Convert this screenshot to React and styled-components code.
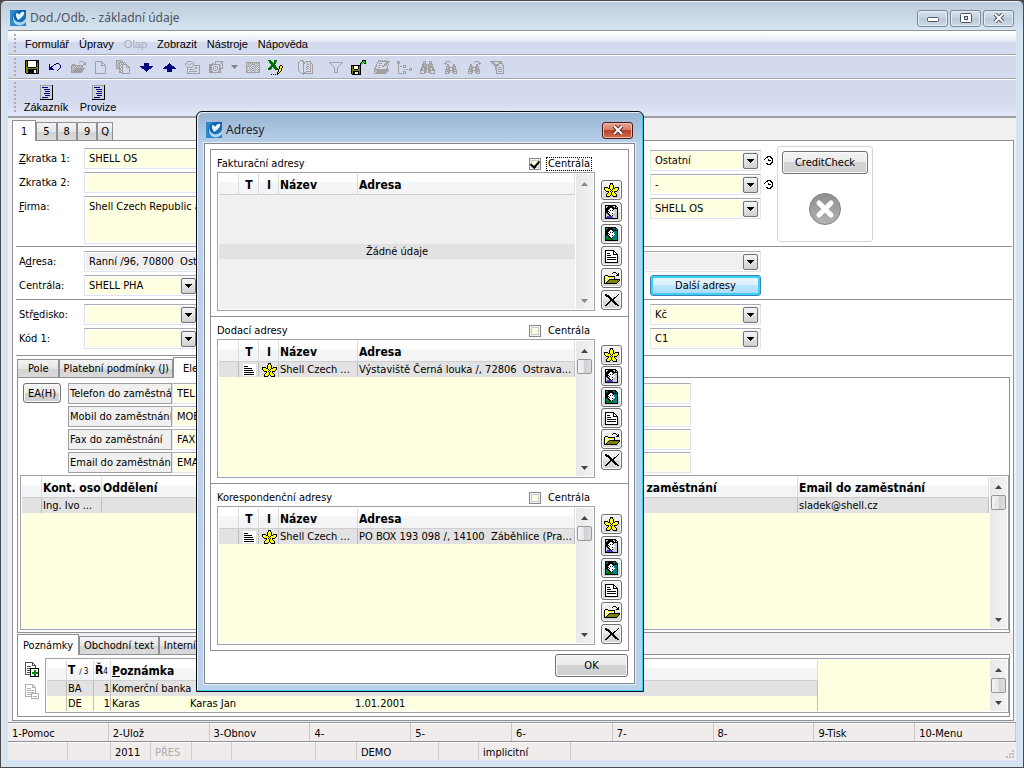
import React, { useState } from 'react';
import styled, { createGlobalStyle, css } from 'styled-components';

const ui = '"DejaVu Sans Condensed", "Noto Sans", sans-serif';
const arial = '"Liberation Sans", Arial, sans-serif';
const segoe = '"Noto Sans", "Open Sans", sans-serif';

const GlobalStyle = createGlobalStyle`
  * {
    box-sizing: border-box;
  }

  body {
    margin: 0;
    background: #4a4a4e;
    font-family: ${ui};
    font-size: 11px;
    line-height: 13px;
    color: #000;
  }

  button, input, select, textarea {
    font: inherit;
    color: inherit;
    margin: 0;
  }
`;

/* ---------- icons ---------- */

const palette = {
  k: '#000000',
  g: '#a0a0a0',
  l: '#cfd2da',
  w: '#ffffff',
  o: '#808000',
  n: '#000080',
  y: '#ffff66',
  Y: '#ffff00',
  b: '#c8c8d0',
  t: '#008080',
  d: '#007000',
  r: '#00e000',
  p: '#4040c0',
};

// Every letter in a row is one pixel, a dot is transparent
const PixelIcon = ({ rows }) => (
  <svg width={rows[0].length} height={rows.length} shapeRendering="crispEdges" aria-hidden="true">
    {rows.map((row, y) =>
      row.split('').map((c, x) =>
        palette[c] ? <rect key={`${x}-${y}`} x={x} y={y} width="1" height="1" fill={palette[c]} /> : null
      )
    )}
  </svg>
);

const icons = {
  save: [
    'kkkkkkkkkkkkkk',
    'kokwwwwwwwwkok',
    'kokwwwwwwwwkkk',
    'kokwwwwwwwwkok',
    'kokwwwwwwwwkok',
    'kokwwwwwwwwkok',
    'kokwwwwwwwwkok',
    'kookkkkkkkkook',
    'kooooooooooook',
    'kookkkkkkkkkok',
    'kookkkkkkwwkok',
    'kookkkkkkwwkok',
    'kookkkkkkwwkok',
    '.kkkkkkkkkkkkk',
  ],
  undo: [
    '.......nnn..',
    'n....nn...n.',
    'n...n......n',
    'n.nn.......n',
    'nnn........n',
    'nnnn......n.',
    'nnnnn....n..',
    '........n...',
  ],
  open: [
    '..........ggg...',
    '.........g...g.g',
    '..............gg',
    '..ggg........ggg',
    '.gggggggggggg...',
    '.glglglglglgg...',
    '.gglglglglglg...',
    '.glglgggggggggg.',
    '.gglgggggggggg..',
    '.glgggggggggg...',
    '.gggggggggggg...',
    '.ggggggggggg....',
  ],
  page: [
    'ggggggg....',
    'g.....gg...',
    'g.....g.g..',
    'g.....g..g.',
    'g.....ggggg',
    'g.........g',
    'g.........g',
    'g.........g',
    'g.........g',
    'g.........g',
    'g.........g',
    'g.........g',
    'ggggggggggg',
  ],
  pages: [
    'gggggg.........',
    'g.g.g.g........',
    'gg.gggggg......',
    'g.gg.g.g.g.....',
    'gg.g.gggggg....',
    'g.ggg.g...gg...',
    'gg.g.gg...g.g..',
    'g.gg.gg...gggg.',
    'ggggg.g......g.',
    '...gg.g......g.',
    '...g.gg......g.',
    '...gg.g......g.',
    '...gggg......g.',
    '......gggggggg.',
  ],
  down: [
    '....nnnnn....',
    '....nnnnn....',
    '....nnnnn....',
    'nnnnnnnnnnnnn',
    '.nnnnnnnnnnn.',
    '..nnnnnnnnn..',
    '....nnnnn....',
    '.....nnn.....',
    '......n......',
  ],
  up: [
    '......n......',
    '.....nnn.....',
    '....nnnnn....',
    '..nnnnnnnnn..',
    '.nnnnnnnnnnn.',
    'nnnnnnnnnnnnn',
    '....nnnnn....',
    '....nnnnn....',
    '....nnnnn....',
  ],
  mail: [
    '..ggggg.........',
    '.g.....g........',
    'g.g...g.g.......',
    'g..g.g..g.......',
    'g...g...ggggggg.',
    '.g.....g......g.',
    '..ggggg...gg..g.',
    '..g.......gg..g.',
    '..g.ggggg.....g.',
    '..g...........g.',
    '..g.gggggggg..g.',
    '..g...........g.',
    '..ggggggggggggg.',
  ],
  camera: [
    '......gggggggg',
    '......g.....gg',
    '...gg.g....g.g',
    'ggggggggggg..g',
    'gggg......gg.g',
    'ggg..ggg..g..g',
    'ggg.g...g.gg.g',
    'ggg.g.g.g.gggg',
    'ggg.g...g.gg..',
    'ggg..ggg..gg..',
    'gggg.....ggg..',
    'gggggggggggg..',
  ],
  envelope: [
    'gggggggggggggg',
    'glglglglglglgg',
    'g.g..gggg..g.g',
    'gg.gg....gg.gg',
    'g.g.g.gg.g.g.g',
    'gg.g.g..g.g.gg',
    'g...g.gg.g...g',
    'gg.g.g..g.g.gg',
    'g.g.g.gg.g.g.g',
    'gg.l.g..g.l.gg',
    'gggggggggggggg',
  ],
  excel: [
    'ddd...ddd......',
    '.ddd..ddd......',
    '.dddd.dd.......',
    '..dddddd.......',
    '...dddd........',
    '...ddddd....kk.',
    '..dddddd...kYYk',
    '.ddd.dddd..kYYk',
    'dddd..dddd.kYk.',
    'ddd....dddkYYk.',
    '..........kYYk.',
    '..........kYk..',
    '.........kYk...',
    '.........kk....',
    '...k.k.k.k.....',
  ],
  book: [
    '..ggg...........',
    '.g..gg..ggggg...',
    'g....ggg....g...',
    'g....gg..g..gg..',
    'g....g...gg.g.g.',
    'g....g..g...g.g.',
    'g....g...gg.g.g.',
    'g....g..g...g.g.',
    'g....g...gg.g.g.',
    'g....g..g...g.g.',
    'g....g......g.g.',
    '.g...g..ggggg.g.',
    '..g..ggg......g.',
    '...gggggggggggg.',
    '.....g..........',
  ],
  filter: [
    'gggggggggggggg',
    '.g..........g.',
    '..g........g..',
    '...g......g...',
    '....g....g....',
    '.....g..g.....',
    '.....g..g.....',
    '.....g..g.....',
    '.....g..g.....',
    '.....g..g.....',
    '.....gggg.....',
  ],
  saveAs: [
    '...........kkkk',
    '...........krrk',
    '..........krrrk',
    '.........krr.kk',
    '.........kr....',
    'kkkkkkkkkk.....',
    'kokwwwwkok.....',
    'kokwwwwkok.....',
    'kokwwwwkok.....',
    'kookkkkook.....',
    'kooooooook.....',
    'kokkkkkkok.....',
    'kokkwwwkok.....',
    'kokkwwwkok.....',
    '.kkkkkkkkk.....',
  ],
  stack: [
    '....g.g.g.g.g...',
    '....gggggggggggg',
    '...g........ggg.',
    '...g.ggg...ggg..',
    '..g.......ggg.g.',
    '..g.ggg..ggg.g..',
    '.gg.....gg...g..',
    '.g..gg.......g..',
    'gg..........gg..',
    'ggggggggggggggg.',
    'g.ggggggggggggg.',
    'gg.ggggggggggg..',
    'g.ggggggggggg...',
    'gggggggggggg....',
  ],
  tree: [
    'ggg............',
    'g.g............',
    'ggg............',
    '.g.............',
    '.g....ggg......',
    '.g.gg.g.g......',
    '.g....ggg......',
    '.g..........ggg',
    '.g.....g.gg.g.g',
    '.g..........ggg',
    '.g....ggg......',
    '.g....g.g......',
    '.gggg.ggg......',
  ],
  binoculars: [
    '...ggg...ggg...',
    '...g.g...g.g...',
    '...ggg...ggg...',
    '..ggggg.ggggg..',
    '..gg.ggggg.gg..',
    '..ggggg.ggggg..',
    '.gggggg.gggggg.',
    '.gg.ggggggg.gg.',
    'ggg.ggg.ggg.ggg',
    'ggggggg.ggggggg',
    'g...ggg.ggg...g',
    'g...ggg.ggg...g',
    'ggggg.....ggggg',
  ],
  findPrev: [
    '..gggg........',
    '.g....g.......',
    'ggg...........',
    '.g.gg....gg...',
    '...gg....gg...',
    '..gggg..gggg..',
    '..g.gggggg.g..',
    '..gggg..gggg..',
    '.ggggg..ggggg.',
    '.g.gggggggg.g.',
    '.ggggg..ggggg.',
    '.g..gg..gg..g.',
    '.gggg....gggg.',
  ],
  findNext: [
    '........gggg..',
    '.......g....g.',
    '...........ggg',
    '...gg....gg.g.',
    '...gg....gg...',
    '..gggg..gggg..',
    '..g.gggggg.g..',
    '..gggg..gggg..',
    '.ggggg..ggggg.',
    '.g.gggggggg.g.',
    '.ggggg..ggggg.',
    '.g..gg..gg..g.',
    '.gggg....gggg.',
  ],
  filterPage: [
    'gggggggggggg..',
    '.ggg.....ggg..',
    '..ggg...ggggg.',
    '...gggggg...g.',
    '....ggggg...gg',
    '.....gg......g',
    '.....gg.gggg.g',
    '.....gg......g',
    '.....gg.gggg.g',
    '......g......g',
    '......g.gggg.g',
    '......g......g',
    '......gggggggg',
  ],
  form: [
    'ggggggggggggk',
    'gllllllllllbk',
    'glnnnnnnlllbk',
    'gllllllllllbk',
    'glllnnnnnnlbk',
    'gllllllllllbk',
    'gllllnnnnnlbk',
    'gllllllllllbk',
    'glllnnnnnnlbk',
    'gllllllllllbk',
    'gllllnnnnnlbk',
    'gllllllllllbk',
    'glnnnnnnlllbk',
    'gbbbbbbbbbbbk',
    'kkkkkkkkkkkkk',
  ],
  contact: [
    'kkkkkkkkkkk..',
    'kbbkkkkkbbkk.',
    'kbkkkkkkkbkbk',
    'kkkkkwwkkkkkk',
    'kkkkwwwwkbbbk',
    'kkkwwkwkwbbbk',
    'kkkkwwwwwbbbk',
    'kkkwkwwwwwbbk',
    'kbkkwwwkwbbbk',
    'kbbkkwwwbbbbk',
    'kbbbkkwkbbbbk',
    'kbppppkbbbbbk',
    'kpppppppbbbbk',
    'kkkkkkkkkkkkk',
  ],
  contactAlt: [
    'kkkkkkkkkkk..',
    'kttkkkkkttkk.',
    'ktkkkkkkktktk',
    'kkkkkwwkkkkkk',
    'kkkkwwwwktttk',
    'kkkwwkwkwtttk',
    'kkkkwwwwwtttk',
    'kkkwkwwwwwttk',
    'ktkkwwwkwtttk',
    'kttkkwwwttttk',
    'ktttkkwkttttk',
    'ktddddktttttk',
    'kdddddddttttk',
    'kkkkkkkkkkkkk',
  ],
  sheet: [
    'kkkkkkkkk....',
    'kwwwwwwwkk...',
    'kwwwwwwwkwk..',
    'kwkkkwwwkwwk.',
    'kwwwwwwwkkkkk',
    'kwkkkkwwwwwwk',
    'kwwwwwwwwwwwk',
    'kwkkkkkkkkkwk',
    'kwwwwwwwwwwwk',
    'kwkkkkkkkkkwk',
    'kwwwwwwwwwwwk',
    'kwwwwwwwwwwwk',
    'kkkkkkkkkkkkk',
  ],
  folder: [
    '.........kkk....',
    '........k...k.k.',
    '.............kk.',
    '.kkk........kkk.',
    'kYwYkkkkkkk.....',
    'kwYwYwYwYwk.....',
    'kYwYwYwYwYk.....',
    'kwYwYkkkkkkkkkkk',
    'kYwYkooooooooook',
    'kwYkooooooooook.',
    'kYkooooooooook..',
    'kkkkkkkkkkkkk...',
  ],
  remove: [
    'kk...........k',
    'kkkk........k.',
    '.kkkk......k..',
    '...kkk...kk...',
    '....kkk.kk....',
    '.....kkkk.....',
    '.....kkkk.....',
    '....kk.kkk....',
    '...kk...kkk...',
    '..kk.....kkk..',
    '.kk.......kkk.',
    'kk..........kk',
  ],
  star: [
    '......kkk......',
    '......kYk......',
    '.....kYYYk.....',
    '.....kYYYk.....',
    'kkkk.kYYYk.kkkk',
    'kYYYkkYYYkkYYYk',
    'kYYYYYkYkYYYYYk',
    '.kYYYYYkYYYYYk.',
    '..kkkYkYkYkkk..',
    '....kYYkYYk....',
    '...kYYYkYYYk...',
    '..kYYYYkYYYYk..',
    '..kYYYk.kYYYk..',
    '..kkkk...kkkk..',
  ],
  text: [
    'wwwwwwwwwwwww',
    'wwwwwwwwwwwww',
    'wkkkkwwwwwwww',
    'wwwwwwwwwwwww',
    'wkkkkkkkkwwww',
    'wwwwwwwwwwwww',
    'wkkkkkkkkkwww',
    'wwwwwwwwwwwww',
    'wkkkkkkkkkkww',
    'wwwwwwwwwwwww',
    'wkkkkkkkkkkww',
    'wwwwwwwwwwwww',
  ],
  arrowDown: ['kkkkkkk', '.kkkkk.', '..kkk..', '...k...'],
  clock: [
    '...kkkk..',
    '..kk..kk.',
    '.k.....kk',
    'k...k...k',
    '....kkk.k',
    '........k',
    '.......kk',
    '..kk..kk.',
    '...kkkk..',
  ],
};

const Logo = () => (
  <svg width="16" height="16" viewBox="0 0 16 16" aria-hidden="true">
    <defs>
      <linearGradient id="logo" x1="0" y1="0" x2="1" y2="1">
        <stop offset="0" stopColor="#3d9ad6" />
        <stop offset="0.4" stopColor="#0d5aa4" />
        <stop offset="1" stopColor="#2f86c8" />
      </linearGradient>
    </defs>
    <rect width="16" height="16" fill="url(#logo)" />
    <path d="M0 0h6C3 3 2 6 2 9c1 3 3 5 5 7H0z" fill="#2b8bce" />
    <path d="M4 5c-1 5 3 8 7 7 2 0 4-2 5-4v4c-2 3-6 4-9 3-4-2-5-6-3-10z" fill="#a9d7f2" />
    <path d="M8 10C6 7 5 4 7 3c1 0 2 1 2 2 1-2 3-4 5-3 1 2-1 4-3 6z" fill="#e4f4fc" />
  </svg>
);

const NoteIcon = ({ color, minus }) => (
  <svg width="15" height="16" viewBox="0 0 15 16" shapeRendering="crispEdges" aria-hidden="true">
    <path d="M.5 .5h7l3 3v9h-10zM7.5 .5v3h3M2 4.5h4M2 6.5h7M2 8.5h7M2 10.5h4" fill="#fff" stroke={color} />
    {minus ? (
      <path d="M6.500 9.500h7v5h-7zM8 12h4" fill="#fff" stroke={color} />
    ) : (
      <>
        <rect x="5.500" y="6.500" width="8" height="8" fill="#fff" stroke="#000" />
        <path d="M10 8v6M7 11h6" stroke="#008a00" strokeWidth="2" />
      </>
    )}
  </svg>
);

/* ---------- window chrome ---------- */

const Window = styled.div`
  position: relative;
  display: flex;
  flex-direction: column;
  min-height: 100vh;
  padding: 0 7px 7px;
  border: 1px solid #4a4a4e;
  border-radius: 6px 6px 0 0;
  background: linear-gradient(#bccbdb, #d7e5f2 30px);
  box-shadow: inset 0 1px 0 #f1f5f9;
`;

const TitleBar = styled.header`
  display: flex;
  align-items: center;
  gap: 4px;
  height: ${(p) => p.$height}px;
  padding: 5px 2px 0 2px;
  font-family: ${segoe};
  color: ${(p) => p.$color};
`;

const Title = styled.h1`
  flex: 1;
  margin: 0;
  font-size: 12px;
  line-height: 16px;
  font-weight: 400;
`;

const CaptionButtons = styled.div`
  display: flex;
  gap: 2px;
`;

const CaptionButton = styled.button`
  display: flex;
  align-items: center;
  justify-content: center;
  width: 31px;
  height: 17px;
  padding: 0;
  border: 1px solid #7b8794;
  border-radius: 3px;
  background: linear-gradient(#d9e4ee, #c3d0dd 50%, #b9c8d8 50%, #cddae6);
  box-shadow: inset 0 0 0 1px #e6eef6;

  ${(p) =>
    p.$close &&
    css`
      border-color: #4b1a16;
      background: linear-gradient(#e8a598, #d57a69 48%, #b9412c 50%, #cf6f50);
      box-shadow: inset 0 0 0 1px #efb8ad;
    `}
`;

const Client = styled.div`
  display: flex;
  flex: 1;
  flex-direction: column;
  border-top: 1px solid #8f9398;
  background: #f0f0f0;
`;

const Bar = styled.div`
  display: flex;
  align-items: center;
  height: ${(p) => p.$height || 24}px;
  padding-left: 6px;
  border-top: 1px solid #fff;
  border-bottom: 1px solid #a7a9b0;
  background: #d4daee;
`;

const MenuStrip = styled(Bar).attrs({ as: 'nav' })`
  background: linear-gradient(#fff, #e4e8f4 10px, #d4daee 10px);
  font-family: ${arial};
`;

const BigBar = styled(Bar)`
  border-bottom: 2px solid #9c9ea6;
  background: linear-gradient(#d4daee 60%, #e3e7f7);
`;

const Grip = styled.span`
  align-self: stretch;
  width: 3px;
  margin: 2px 3px 2px 0;
  background: radial-gradient(circle at 1px 1px, #a9abb3 1px, transparent 1px) 0 0 / 3px 4px;
`;

const MenuLink = styled.a`
  padding: 2px 5px 0;
  color: ${(p) => (p.$disabled ? '#a9adb8' : '#000')};
  text-decoration: none;
`;

const ToolButton = styled.button`
  display: flex;
  flex: none;
  align-items: center;
  justify-content: center;
  width: ${(p) => p.$width || 23}px;
  height: 20px;
  margin-right: ${(p) => p.$after || 0}px;
  padding: 0;
  border: 0;
  background: none;
  color: #808080;
`;

const BigButton = styled.button`
  display: flex;
  flex-direction: column;
  align-items: center;
  gap: 1px;
  min-width: 52px;
  padding: 3px 3px 0;
  border: 0;
  background: none;
  font-family: ${arial};
`;

/* ---------- tabs and pages ---------- */

const TabStrip = styled.div`
  display: flex;
  align-items: flex-end;
  height: ${(p) => p.$height}px;
  margin-left: 4px;
  background: ${(p) => p.$background || 'none'};
`;

const Tab = styled.button`
  height: ${(p) => (p.$active ? 21 : 18)}px;
  padding: 0 ${(p) => p.$pad || 5}px;
  border: 1px solid #8e9097;
  border-bottom: 0;
  white-space: nowrap;
  background: linear-gradient(#f4f4f4, #e6e6e6 50%, #d2d2d2 50%, #dadada);

  ${(p) =>
    p.$active &&
    css`
      z-index: 1;
      margin-bottom: -1px;
      background: #fff;
    `}
`;

const Page = styled.main`
  display: flex;
  flex: 1;
  flex-direction: column;
  margin: 0 2px 1px 4px;
  padding-bottom: 3px;
  border: 1px solid #8e9097;
  background: #fff;
`;

const SubPage = styled.section`
  display: flex;
  flex: ${(p) => (p.$grow ? '1' : 'none')};
  flex-direction: ${(p) => (p.$row ? 'row' : 'column')};
  margin: 0 3px 0 4px;
  border: 1px solid #8e9097;
`;

/* ---------- form ---------- */

const Group = styled.div`
  display: grid;
  grid-template-columns: 65px 115px 451px 111px auto;
  grid-auto-rows: 21px;
  align-content: start;
  row-gap: 3px;
  height: ${(p) => p.$height}px;
  margin: 0 1px 0 3px;
  padding: ${(p) => p.$top || 4}px 0 0 3px;
  border-bottom: 1px solid #8e9097;
`;

const FieldLabel = styled.label`
  grid-column: 1;
  padding-top: 4px;
`;

const box = css`
  height: 21px;
  border: 1px solid #dfe3ef;
  border-top-color: #a9abb4;
  background: ${(p) => (p.$disabled ? '#f0f0f0' : '#ffffe1')};
  box-shadow: inset 0 0 0 1px #fff;
`;

const TextInput = styled.input`
  ${box}
  grid-column: ${(p) => p.$column || 'auto'};
  width: ${(p) => (p.$width ? `${p.$width}px` : '100%')};
  padding: 0 4px;
`;

const TextArea = styled.textarea`
  ${box}
  grid-column: 2 / 4;
  grid-row: 3 / 5;
  width: 400px;
  height: 48px;
  padding: 3px 4px;
  resize: none;
`;

const ComboBox = styled.div`
  ${box}
  display: flex;
  align-items: center;
  grid-column: ${(p) => p.$column};
`;

const ComboSelect = styled.select`
  flex: 1;
  min-width: 0;
  height: 19px;
  padding: 0 4px 1px;
  border: 0;
  appearance: none;
  background: none;
`;

const ComboArrow = styled.span`
  display: flex;
  align-items: center;
  justify-content: center;
  width: 17px;
  height: 17px;
  margin-right: 1px;
  background: #f0f0f0;

  &::before {
    content: '';
    position: absolute;
    width: 13px;
    height: 14px;
    border: 1px solid #70737a;
    border-radius: 2px;
    background: linear-gradient(#f6f6f6, #e2e2e2 50%, #d0d0d0);
  }

  svg {
    position: relative;
  }
`;

const Side = styled.div`
  display: flex;
  grid-column: 4 / 6;
  grid-row: 1 / 4;
  gap: 3px;
`;

const SideCombos = styled.div`
  display: flex;
  flex-direction: column;
  gap: 3px;
  width: 111px;
  padding-top: 2px;
`;

const Clocks = styled.div`
  display: flex;
  flex-direction: column;
  gap: 15px;
  width: 10px;
  padding-top: 8px;
`;

const CreditBox = styled.div`
  display: flex;
  flex-direction: column;
  align-items: center;
  gap: 19px;
  width: 96px;
  height: 96px;
  margin-top: -2px;
  padding-top: 4px;
  border: 1px solid #ccd7e2;
  border-radius: 3px;
`;

const PushButton = styled.button`
  width: ${(p) => p.$width}px;
  height: ${(p) => p.$height}px;
  padding: 0;
  border: 1px solid #707070;
  border-radius: 3px;
  background: linear-gradient(#f3f3f3, #ebebeb 50%, #d4d4d4 50%, #cfcfcf);
  box-shadow: inset 0 0 0 1px #fafafa;
  white-space: nowrap;

  ${(p) =>
    p.$focus &&
    css`
      grid-column: 4;
      border-color: #3c7fb1;
      background: linear-gradient(#eaf6fd, #d9f0fc 50%, #bee6fd 50%, #a7d9f5);
      box-shadow: inset 0 0 0 2px #3cd0f5;
    `}
`;

const PhoneArea = styled.div`
  display: grid;
  grid-template-columns: 45px 104px 519px;
  grid-auto-rows: 21px;
  row-gap: 2px;
  padding: 5px 0 2px 5px;
`;

const PhoneLabel = styled.label`
  grid-column: 2;
  padding: 3px 0 3px 1px;
  overflow: hidden;
  border: 1px solid #a0a0a4;
  background: #f0f0f0;
  white-space: nowrap;
`;

/* ---------- lists ---------- */

const ListBox = styled.div`
  display: flex;
  flex: ${(p) => (p.$height ? 'none' : '1')};
  height: ${(p) => (p.$height ? `${p.$height}px` : 'auto')};
  margin: ${(p) => p.$margin || '0'};
  padding: 1px;
  border: 1px solid #a0a2a9;
  background: #fff;
`;

const ListBody = styled.div`
  flex: 1;
  min-width: 0;
  background: ${(p) => (p.$empty ? '#f0f0f0' : '#ffffe1')};
`;

const Table = styled.table`
  width: ${(p) => (p.$width ? `${p.$width}px` : '100%')};
  table-layout: fixed;
  border-collapse: separate;
  border-spacing: 0;
`;

const Th = styled.th`
  width: ${(p) => (p.$width ? `${p.$width}px` : 'auto')};
  height: 21px;
  padding: 2px 0 0 1px;
  overflow: hidden;
  border-right: 1px solid #dcdcdc;
  border-bottom: 1px solid #cfcfcf;
  background: linear-gradient(#fff 40%, #f4f6f8 40%, #f1f3f5);
  font-size: 12px;
  text-align: ${(p) => p.$align || 'left'};
  white-space: nowrap;
`;

const Td = styled.td`
  height: 15px;
  padding: 1px 0 0 1px;
  overflow: hidden;
  border-right: 1px solid #bdbdbd;
  background: ${(p) => (p.$selected ? '#e2e2e2' : '#ffffe1')};
  line-height: 14px;
  text-align: ${(p) => p.$align || 'left'};
  text-overflow: ellipsis;
  white-space: pre;

  svg {
    display: block;
    margin: 0 auto;
  }
`;

const EmptyRow = styled.p`
  margin: 49px 0 0;
  background: #e2e2e2;
  line-height: 15px;
  text-align: center;
`;

const Track = styled.div`
  display: flex;
  flex-direction: column;
  align-items: center;
  width: 17px;
  margin-left: 1px;
  padding: 1px 1px 0 0;
  background: linear-gradient(90deg, #e8e8e8, #f2f2f2);
`;

const ScrollButton = styled.button`
  width: 15px;
  height: 17px;
  padding: 0;
  border: 0;
  background: none;
  color: ${(p) => (p.$dim ? '#888' : '#444')};
  line-height: 0;
`;

const Thumb = styled.div`
  width: 15px;
  height: 15px;
  border: 1px solid #979797;
  border-radius: 2px;
  background: linear-gradient(90deg, #f4f4f4, #e4e4e4 50%, #cfcfd4 50%, #dedee2);
`;

const Spacer = styled.div`
  flex: 1;
`;

const NoteIcons = styled.div`
  display: flex;
  flex-direction: column;
  gap: 6px;
  width: 27px;
  padding: 7px 0 0 7px;
`;

const NotePart = styled.span`
  display: inline-block;
  width: ${(p) => p.$width}px;
`;

const Small = styled.span`
  font-size: 8px;
  font-weight: 400;
`;

const Keys = styled.footer`
  display: flex;
  height: 19px;
  border-top: 1px solid #8e9097;
  background: #f0eceb;
  box-shadow: inset 0 1px 0 #fff;
`;

const Key = styled.button`
  flex: 1;
  padding: 2px 0 0 4px;
  border: 0;
  border-right: 1px solid #c9c9c9;
  background: none;
  text-align: left;
`;

const StatusCell = styled.span`
  width: ${(p) => p.$width}px;
  padding: 4px 0 0 4px;
  border-right: 1px solid #d0cdcc;
  color: ${(p) => (p.$dim ? '#b0adac' : '#000')};
`;

const SizeGrip = styled.svg`
  align-self: flex-end;
  margin: 0 2px 2px auto;
`;

/* ---------- dialog ---------- */

const Dialog = styled.div`
  position: absolute;
  top: 110px;
  left: 195px;
  z-index: 5;
  width: 448px;
  padding: 0 8px 7px 7px;
  border: 1px solid #0c0f14;
  border-radius: 6px 6px 0 0;
  background: linear-gradient(#98b4d2, #b9d1ea 32px);
  box-shadow: inset -1px -1px 0 #35d3f0, inset 1px 1px 0 #e3eef8;
`;

const DialogBody = styled.div`
  padding: 5px;
  border: 1px solid #83868c;
  outline: 1px solid #e6eef7;
  background: #fff;
`;

const Sections = styled.div`
  border: 1px solid #8e9097;
`;

const Section = styled.section`
  display: grid;
  grid-template-columns: 378px 21px;
  column-gap: 6px;
  height: 167px;
  padding-left: 6px;
  border-bottom: 1px solid #8e9097;

  &:last-child {
    height: 166px;
    border-bottom: 0;
  }
`;

const SectionHead = styled.div`
  display: flex;
  align-items: center;
  justify-content: space-between;
  height: 22px;
  padding: 5px 3px 0 0;
`;

const CheckLabel = styled.label`
  display: flex;
  align-items: center;
  gap: 5px;

  span {
    padding: 0 1px;
    border: 1px dotted ${(p) => (p.$focus ? '#000' : 'transparent')};
    line-height: 12px;
  }
`;

const CheckBox = styled.input`
  display: grid;
  place-items: center;
  width: 12px;
  height: 12px;
  border: 1px solid #85878c;
  appearance: none;
  background: #ffffe1;
  box-shadow: inset 0 0 0 1px #f4f4f4, inset 0 0 0 2px #c8cace;

  &:checked::before {
    content: '';
    width: 4px;
    height: 7px;
    border: solid #000;
    border-width: 0 2px 2px 0;
    transform: rotate(40deg);
  }
`;

const SideButtons = styled.div`
  display: flex;
  flex-direction: column;
  gap: ${(p) => (p.$compact ? 1 : 2)}px;
  padding-top: ${(p) => (p.$compact ? 28 : 30)}px;
`;

const IconButton = styled.button`
  display: flex;
  align-items: center;
  justify-content: center;
  width: 21px;
  height: 20px;
  padding: 0;
  border: 1px solid #707070;
  border-radius: 3px;
  background: linear-gradient(#f3f3f3, #ebebeb 50%, #dcdcdc 50%, #d4d4d4);
  box-shadow: inset 0 0 0 1px #fafafa;
`;

const DialogFooter = styled.div`
  display: flex;
  justify-content: flex-end;
  padding: 3px 1px 1px 0;
`;

/* ---------- composed parts ---------- */

const Combo = ({ id, value, column, disabled, label }) => (
  <ComboBox $column={column} $disabled={disabled}>
    <ComboSelect id={id} aria-label={label} defaultValue={value}>
      <option>{value}</option>
    </ComboSelect>
    <ComboArrow>
      <PixelIcon rows={icons.arrowDown} />
    </ComboArrow>
  </ComboBox>
);

const ScrollBar = ({ dim }) => (
  <Track>
    <ScrollButton $dim={dim} aria-label="Nahoru">
      <svg width="7" height="4">
        <path d="M0 4L3.500 0L7 4z" fill="currentColor" />
      </svg>
    </ScrollButton>
    {!dim && <Thumb />}
    <Spacer />
    <ScrollButton $dim={dim} aria-label="Dolů">
      <svg width="7" height="4">
        <path d="M0 0L3.500 4L7 0z" fill="currentColor" />
      </svg>
    </ScrollButton>
  </Track>
);

const AddressSection = ({ title, central, focus, compact, row }) => {
  const [checked, setChecked] = useState(central);

  return (
    <Section>
      <div>
        <SectionHead>
          <span>{title}</span>
          <CheckLabel $focus={focus}>
            <CheckBox type="checkbox" checked={checked} onChange={(e) => setChecked(e.target.checked)} />
            <span>Centrála</span>
          </CheckLabel>
        </SectionHead>
        <ListBox $height={139}>
          <ListBody $empty={!row}>
            <Table>
              <thead>
                <tr>
                  <Th $width={20} />
                  <Th $width={20} $align="center">T</Th>
                  <Th $width={20} $align="center">I</Th>
                  <Th $width={79}>Název</Th>
                  <Th>Adresa</Th>
                </tr>
              </thead>
              {row && (
                <tbody>
                  <tr>
                    <Td $selected />
                    <Td $selected><PixelIcon rows={icons.text} /></Td>
                    <Td $selected><PixelIcon rows={icons.star} /></Td>
                    <Td $selected>{row.name}</Td>
                    <Td $selected>{row.address}</Td>
                  </tr>
                </tbody>
              )}
            </Table>
            {!row && <EmptyRow>Žádné údaje</EmptyRow>}
          </ListBody>
          <ScrollBar dim={!row} />
        </ListBox>
      </div>
      <SideButtons $compact={compact}>
        {['star', 'contact', 'contactAlt', 'sheet', 'folder', 'remove'].map((name) => (
          <IconButton key={name} aria-label={name}>
            <PixelIcon rows={icons[name]} />
          </IconButton>
        ))}
      </SideButtons>
    </Section>
  );
};

const tools = [
  { icon: 'save' },
  { icon: 'undo' },
  { icon: 'open' },
  { icon: 'page' },
  { icon: 'pages' },
  { icon: 'down' },
  { icon: 'up' },
  { icon: 'mail' },
  { icon: 'camera' },
  { icon: 'caret', width: 14 },
  { icon: 'envelope' },
  { icon: 'excel', after: 7 },
  { icon: 'book', after: 7 },
  { icon: 'filter' },
  { icon: 'saveAs' },
  { icon: 'stack' },
  { icon: 'tree' },
  { icon: 'binoculars' },
  { icon: 'findPrev' },
  { icon: 'findNext' },
  { icon: 'filterPage' },
];

const phones = [
  { id: 'tel', label: 'Telefon do zaměstnání', value: 'TEL' },
  { id: 'mob', label: 'Mobil do zaměstnání', value: 'MOB' },
  { id: 'fax', label: 'Fax do zaměstnání', value: 'FAX' },
  { id: 'ema', label: 'Email do zaměstnání', value: 'EMAIL' },
];

const keys = ['1-Pomoc', '2-Ulož', '3-Obnov', '4-', '5-', '6-', '7-', '8-', '9-Tisk', '10-Menu'];

const status = [
  { width: 60 },
  { width: 43 },
  { width: 40, text: '2011' },
  { width: 41, text: 'PŘES', dim: true },
  { width: 40 },
  { width: 84 },
  { width: 41 },
  { width: 82, text: 'DEMO' },
  { width: 40 },
  { width: 92, text: 'implicitní' },
];

const App = () => (
  <>
    <GlobalStyle />
    <Window>
      <TitleBar $height={29} $color="#4c5560">
        <Logo />
        <Title>Dod./Odb. - základní údaje</Title>
        <CaptionButtons>
          <CaptionButton aria-label="Minimalizovat">
            <svg width="12" height="8">
              <rect x="0.500" y="3.500" width="11" height="4" rx="1" fill="#fff" stroke="#4c5560" />
            </svg>
          </CaptionButton>
          <CaptionButton aria-label="Maximalizovat">
            <svg width="12" height="10">
              <rect x="0.500" y="0.500" width="11" height="9" rx="1" fill="#fff" stroke="#4c5560" />
              <rect x="4.500" y="3.500" width="3" height="3" fill="#c3d0dd" stroke="#4c5560" />
            </svg>
          </CaptionButton>
          <CaptionButton aria-label="Zavřít">
            <svg width="12" height="10">
              <path d="M2 1l8 8M10 1l-8 8" stroke="#4c5560" strokeWidth="4" />
              <path d="M2 1l8 8M10 1l-8 8" stroke="#fff" strokeWidth="2" />
            </svg>
          </CaptionButton>
        </CaptionButtons>
      </TitleBar>

      <Client>
        <MenuStrip>
          <Grip />
          <MenuLink href="#formular">Formulář</MenuLink>
          <MenuLink href="#upravy">Úpravy</MenuLink>
          <MenuLink href="#olap" $disabled>Olap</MenuLink>
          <MenuLink href="#zobrazit">Zobrazit</MenuLink>
          <MenuLink href="#nastroje">Nástroje</MenuLink>
          <MenuLink href="#napoveda">Nápověda</MenuLink>
        </MenuStrip>
        <Bar>
          <Grip />
          {tools.map((tool) => (
            <ToolButton key={tool.icon} $width={tool.width} $after={tool.after} aria-label={tool.icon}>
              {tool.icon === 'caret' ? (
                <svg width="7" height="4">
                  <path d="M0 0h7L3.500 4z" fill="currentColor" />
                </svg>
              ) : (
                <PixelIcon rows={icons[tool.icon]} />
              )}
            </ToolButton>
          ))}
        </Bar>
        <BigBar $height={39}>
          <Grip />
          <BigButton>
            <PixelIcon rows={icons.form} />
            Zákazník
          </BigButton>
          <BigButton>
            <PixelIcon rows={icons.form} />
            Provize
          </BigButton>
        </BigBar>

        <TabStrip $height={22}>
          <Tab $active $pad={8}>1</Tab>
          <Tab $pad={6}>5</Tab>
          <Tab $pad={6}>8</Tab>
          <Tab $pad={6}>9</Tab>
          <Tab $pad={3}>Q</Tab>
        </TabStrip>

        <Page>
          <Group $height={106} $top={7}>
            <FieldLabel htmlFor="short1"><u>Z</u>kratka 1:</FieldLabel>
            <TextInput id="short1" $column="2 / 4" $width={400} defaultValue="SHELL OS" />
            <FieldLabel htmlFor="short2">Zkratka 2:</FieldLabel>
            <TextInput id="short2" $column="2 / 4" $width={400} />
            <FieldLabel htmlFor="company"><u>F</u>irma:</FieldLabel>
            <TextArea id="company" defaultValue="Shell Czech Republic a.s." />
            <Side>
              <SideCombos>
                <Combo label="Typ" value="Ostatní" />
                <Combo label="Skupina" value="-" />
                <Combo label="Zkratka" value="SHELL OS" />
              </SideCombos>
              <Clocks>
                <PixelIcon rows={icons.clock} />
                <PixelIcon rows={icons.clock} />
              </Clocks>
              <CreditBox>
                <PushButton $width={86} $height={23}>CreditCheck</PushButton>
                <svg width="32" height="32" viewBox="0 0 32 32" aria-hidden="true">
                  <defs>
                    <linearGradient id="disc" x1="0" y1="0" x2="0" y2="1">
                      <stop offset="0" stopColor="#8e8e8e" />
                      <stop offset="1" stopColor="#b4b4b4" />
                    </linearGradient>
                  </defs>
                  <circle cx="16" cy="16" r="15.500" fill="url(#disc)" stroke="#858585" />
                  <path d="M10 10l12 12M22 10L10 22" stroke="#fff" strokeWidth="5" strokeLinecap="round" />
                </svg>
              </CreditBox>
            </Side>
          </Group>

          <Group $height={53}>
            <FieldLabel htmlFor="address">A<u>d</u>resa:</FieldLabel>
            <Combo id="address" column="2 / 5" disabled value={'Ranní /96, 70800\u00a0 Ostrava'} />
            <FieldLabel htmlFor="central">Centrála:</FieldLabel>
            <Combo id="central" column="2" value="SHELL PHA" />
            <PushButton $focus $width={111} $height={21}>Další adresy</PushButton>
          </Group>

          <Group $height={56}>
            <FieldLabel htmlFor="centre">Stř<u>e</u>disko:</FieldLabel>
            <Combo id="centre" column="2" value="" />
            <Combo label="Měna" column="4" value="Kč" />
            <FieldLabel htmlFor="code">Kód 1:</FieldLabel>
            <Combo id="code" column="2" value="" />
            <Combo label="Ceník" column="4" value="C1" />
          </Group>

          <TabStrip $height={21}>
            <Tab $pad={10}>Pole</Tab>
            <Tab $pad={3}>Platební podmínky (J)</Tab>
            <Tab $active $pad={9}>Elektronické adresy</Tab>
          </TabStrip>
          <SubPage $grow>
            <PhoneArea>
              <PushButton $width={38} $height={20}>EA(H)</PushButton>
              {phones.map((phone) => (
                <React.Fragment key={phone.id}>
                  <PhoneLabel htmlFor={phone.id}>{phone.label}</PhoneLabel>
                  <TextInput id={phone.id} $column="3" defaultValue={phone.value} />
                </React.Fragment>
              ))}
            </PhoneArea>
            <ListBox $margin="0 0 2px 2px">
              <ListBody>
                <Table>
                  <thead>
                    <tr>
                      <Th $width={20} />
                      <Th $width={60}>Kont. osoba</Th>
                      <Th>Oddělení</Th>
                      <Th $width={196}>Fax do zaměstnání</Th>
                      <Th $width={191}>Email do zaměstnání</Th>
                    </tr>
                  </thead>
                  <tbody>
                    <tr>
                      <Td $selected />
                      <Td $selected>Ing. Ivo ...</Td>
                      <Td $selected />
                      <Td $selected />
                      <Td $selected>sladek@shell.cz</Td>
                    </tr>
                  </tbody>
                </Table>
              </ListBody>
              <ScrollBar />
            </ListBox>
          </SubPage>

          <TabStrip $height={21} $background="#f0f0f0">
            <Tab $active $pad={5}>Poznámky</Tab>
            <Tab $pad={4}>Obchodní text</Tab>
            <Tab $pad={4}>Interní text</Tab>
          </TabStrip>
          <SubPage $row>
            <NoteIcons>
              <NoteIcon color="#505050" />
              <NoteIcon color="#b0b0b0" minus />
            </NoteIcons>
            <ListBox $margin="3px 0">
              <ListBody>
                <Table $width={771}>
                  <thead>
                    <tr>
                      <Th $width={20} />
                      <Th $width={27}>T <Small>∕ 3</Small></Th>
                      <Th $width={17}>Ř<Small>4</Small></Th>
                      <Th><u>P</u>oznámka</Th>
                    </tr>
                  </thead>
                  <tbody>
                    <tr>
                      <Td $selected />
                      <Td $selected>BA</Td>
                      <Td $selected $align="right">1</Td>
                      <Td $selected>
                        <NotePart $width={97}>Komerční banka</NotePart>
                        <NotePart $width={56}>5666</NotePart>
                        <NotePart $width={95}>Ostrava</NotePart>
                        <NotePart $width={31}>KS</NotePart>
                        CZ 000000777
                      </Td>
                    </tr>
                    <tr>
                      <Td />
                      <Td>DE</Td>
                      <Td $align="right">1</Td>
                      <Td>
                        <NotePart $width={78}>Karas</NotePart>
                        <NotePart $width={165}>Karas Jan</NotePart>
                        1.01.2001
                      </Td>
                    </tr>
                  </tbody>
                </Table>
              </ListBody>
              <ScrollBar />
            </ListBox>
          </SubPage>
        </Page>

        <Keys>
          {keys.map((key) => (
            <Key key={key}>{key}</Key>
          ))}
        </Keys>
        <Keys as="div">
          {status.map((cell, i) => (
            <StatusCell key={i} $width={cell.width} $dim={cell.dim}>{cell.text}</StatusCell>
          ))}
          <SizeGrip width="8" height="8" shapeRendering="crispEdges">
            <path d="M6 0h2v2H6zM3 3h2v2H3zM6 3h2v2H6zM0 6h2v2H0zM3 6h2v2H3zM6 6h2v2H6z" fill="#bdbdbd" />
          </SizeGrip>
        </Keys>
      </Client>

      <Dialog role="dialog" aria-label="Adresy">
        <TitleBar $height={31} $color="#1c232b">
          <Logo />
          <Title as="h2">Adresy</Title>
          <CaptionButton $close aria-label="Zavřít dialog">
            <svg width="12" height="10">
              <path d="M2 1l8 8M10 1l-8 8" stroke="#5c2a25" strokeWidth="4" />
              <path d="M2 1l8 8M10 1l-8 8" stroke="#fff" strokeWidth="2" />
            </svg>
          </CaptionButton>
        </TitleBar>
        <DialogBody>
          <Sections>
            <AddressSection title="Fakturační adresy" central focus />
            <AddressSection
              title="Dodací adresy"
              central={false}
              compact
              row={{ name: 'Shell Czech ...', address: 'Výstaviště Černá louka /, 72806  Ostrava...' }}
            />
            <AddressSection
              title="Korespondenční adresy"
              central={false}
              row={{ name: 'Shell Czech ...', address: 'PO BOX 193 098 /, 14100  Záběhlice (Pra...' }}
            />
          </Sections>
          <DialogFooter>
            <PushButton $width={73} $height={23}>OK</PushButton>
          </DialogFooter>
        </DialogBody>
      </Dialog>
    </Window>
  </>
);

export default App;
